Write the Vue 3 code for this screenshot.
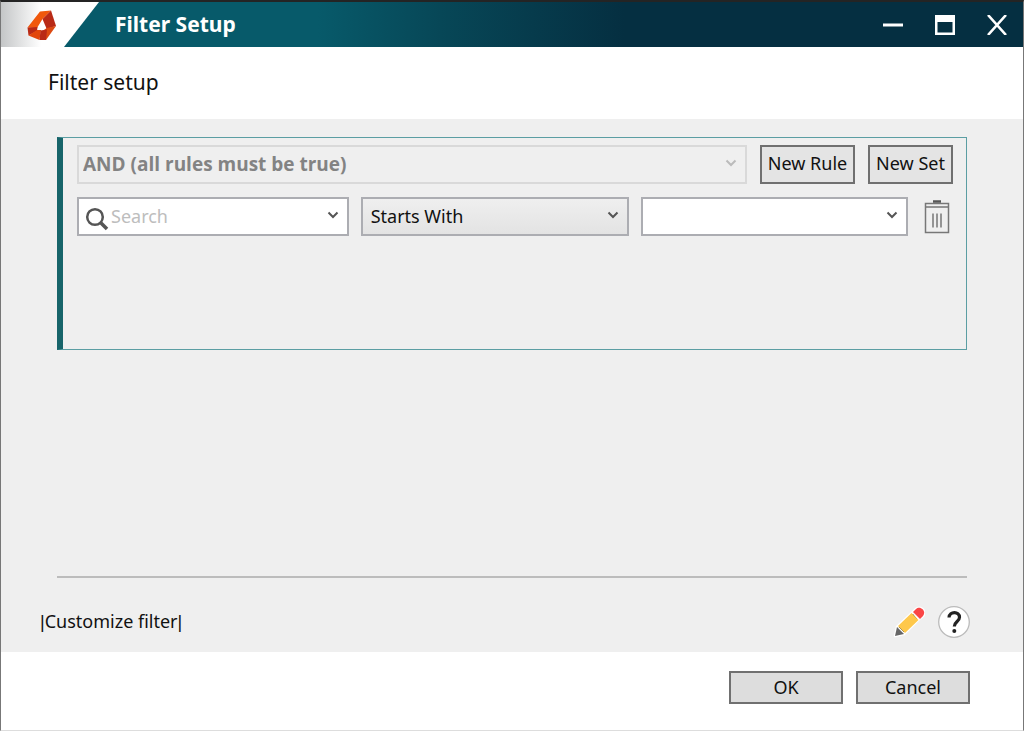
<script setup>
import { ref } from 'vue'

const mode = ref('AND (all rules must be true)')
const field = ref('')
const operator = ref('Starts With')
const value = ref('')
</script>

<template>
  <div class="window">
    <header class="titlebar">
      <div class="brand">
        <svg class="logo" viewBox="0 0 30 32" aria-hidden="true">
          <path d="M13 2.500 24 1.500 15.500 10 10 19 0.500 18.500Z" fill="#f0580c" />
          <path d="M24 1.500 29 17 19.700 20 15.500 10Z" fill="#b92a16" />
          <path d="M29 17 19 31 17 21 19.700 19Z" fill="#dc4a12" />
          <path d="M0.500 18.500 10.500 18 10 22 1.500 26.500Z" fill="#b92a16" />
          <path d="M1.500 26.500 10 21 14 21 12.500 31Z" fill="#e2470b" />
          <path d="M13.500 21.500 20 20.500 19 31 12.500 31Z" fill="#b92a16" />
        </svg>
      </div>
      <h1>Filter Setup</h1>
      <div class="controls">
        <button type="button" aria-label="Minimize">
          <svg viewBox="0 0 20 20"><path d="M0 10H20" stroke="#fff" stroke-width="3" /></svg>
        </button>
        <button type="button" aria-label="Maximize">
          <svg viewBox="0 0 20 20"><path fill="#fff" fill-rule="evenodd" d="M0 0H20V20H0ZM2.500 7V17.500H17.500V7Z" /></svg>
        </button>
        <button type="button" aria-label="Close">
          <svg viewBox="0 0 20 20"><path d="M1 0 19 20M19 0 1 20" stroke="#fff" stroke-width="2.600" /></svg>
        </button>
      </div>
    </header>

    <h2>Filter setup</h2>

    <main>
      <section class="rules" aria-label="Rules">
        <div class="set-row">
          <div class="combo disabled">
            <select v-model="mode" disabled aria-label="Rule combination">
              <option>AND (all rules must be true)</option>
            </select>
            <svg class="chevron" viewBox="0 0 12 8"><path d="M1.500 1.500 6 6 10.500 1.500" /></svg>
          </div>
          <button type="button" class="small">New Rule</button>
          <button type="button" class="small">New Set</button>
        </div>
        <div class="rule-row">
          <div class="combo search">
            <svg class="lens" viewBox="0 0 24 24" aria-hidden="true">
              <circle cx="10" cy="10" r="7.800" />
              <path d="M15.500 15.500 22 22" stroke-width="3.500" />
            </svg>
            <input v-model="field" type="text" placeholder="Search" aria-label="Field" />
            <svg class="chevron" viewBox="0 0 12 8"><path d="M1.500 1.500 6 6 10.500 1.500" /></svg>
          </div>
          <div class="combo operator">
            <select v-model="operator" aria-label="Operator">
              <option>Starts With</option>
            </select>
            <svg class="chevron" viewBox="0 0 12 8"><path d="M1.500 1.500 6 6 10.500 1.500" /></svg>
          </div>
          <div class="combo">
            <input v-model="value" type="text" aria-label="Value" />
            <svg class="chevron" viewBox="0 0 12 8"><path d="M1.500 1.500 6 6 10.500 1.500" /></svg>
          </div>
          <button type="button" class="icon" aria-label="Delete rule">
            <svg class="trash" viewBox="0 0 26 34">
              <path d="M1.500 3.500H24.500V32.500H1.500ZM1.500 7H24.500" fill="none" stroke="#777" stroke-width="1.500" />
              <path d="M9 1.500H17" stroke="#555" stroke-width="2.500" />
              <path d="M9 13.500V27.500M13 13.500V27.500M17 13.500V27.500" stroke="#777" stroke-width="1.500" />
            </svg>
          </button>
        </div>
      </section>

      <hr />

      <div class="caption">
        <p><span class="bar">|</span>Customize filter<span class="bar">|</span></p>
        <button type="button" class="icon" aria-label="Edit">
          <svg class="pencil" viewBox="0 0 32 32">
            <g stroke="#fff" stroke-width="2.500" stroke-linejoin="round">
              <path d="M2 30 4 21 11 28Z" />
              <path d="M4 21 20 6 26 13 11 28Z" />
              <path d="M20 6 23 3C27-1 34 5 30 10L26 13Z" />
            </g>
            <path d="M2 30 4 21 11 28Z" fill="#666" />
            <path d="M5 20 18.500 7 25.500 14 12 27Z" fill="#fec84b" />
            <path d="M20 6 23 3C27-1 34 5 30 10L27 13Z" fill="#fa4646" />
          </svg>
        </button>
        <button type="button" class="icon" aria-label="Help">
          <svg class="help" viewBox="0 0 32 32">
            <circle cx="16" cy="16" r="15.300" fill="#fff" stroke="#bbb" stroke-width="1.300" />
            <path d="M11 11.500C11.500 5 21.500 5 21.500 11.300C21.500 15.500 16.300 15.500 16.300 20.500" fill="none" stroke="#222" stroke-width="3.200" />
            <circle cx="16.300" cy="25" r="2" fill="#222" />
          </svg>
        </button>
      </div>
    </main>

    <footer>
      <button type="button">OK</button>
      <button type="button">Cancel</button>
    </footer>
  </div>
</template>

<style>
body {
  margin: 0;
}
</style>

<style scoped>
.window {
  box-sizing: border-box;
  min-height: 100vh;
  display: flex;
  flex-direction: column;
  border: 1px solid #777;
  border-top: 2px solid #242424;
  border-bottom-color: #ddd;
  background: #fff;
  color: #111;
  font: 18px/24px "Noto Sans", "Open Sans", sans-serif;
}

.window * {
  box-sizing: border-box;
}

button,
input,
select {
  font: inherit;
  color: inherit;
  margin: 0;
  border-radius: 0;
}

svg {
  display: block;
}

.titlebar {
  height: 45px;
  display: flex;
  align-items: center;
  padding-right: 16px;
  background: linear-gradient(90deg, #075a6a 0%, #075a6a 31%, #074757 43%, #052f41 61%, #052f41 100%);
}

.brand {
  width: 98px;
  height: 100%;
  display: flex;
  align-items: center;
  padding-left: 26px;
  background: linear-gradient(90deg, #c4c6c7, #fff 40px);
  clip-path: polygon(0 0, 100% 0, 63px 100%, 0 100%);
}

.logo {
  width: 30px;
  height: 32px;
}

h1 {
  margin: 0 auto 0 16px;
  padding-bottom: 2px;
  color: #fff;
  font-size: 21px;
  line-height: 28px;
  font-weight: 700;
}

.controls {
  display: flex;
  gap: 32px;
}

.controls button,
.icon {
  padding: 0;
  border: 0;
  background: none;
}

.controls svg {
  width: 20px;
  height: 20px;
}

h2 {
  margin: 0;
  padding: 21px 47px 23px;
  font-size: 21px;
  line-height: 28px;
  font-weight: 400;
}

main {
  flex: 1;
  display: flex;
  flex-direction: column;
  padding: 18px 53px 14px 56px;
  background: #efefef;
}

.rules {
  min-height: 213px;
  display: flex;
  flex-direction: column;
  gap: 13px;
  margin-right: 3px;
  padding: 7px 13px 7px 14px;
  border: 1px solid #5b9ea3;
  border-left: 6px solid #17646a;
}

.set-row {
  display: grid;
  grid-template-columns: 1fr 95px 85px;
  gap: 13px;
}

.rule-row {
  display: grid;
  grid-template-columns: 272fr 269fr 267fr 33px;
  gap: 12px;
}

.combo {
  height: 39px;
  min-width: 0;
  display: flex;
  align-items: center;
  position: relative;
  border: 2px solid #acadb2;
  background: #fff;
}

.combo select,
.combo input {
  flex: 1;
  min-width: 0;
  width: 100%;
  height: 100%;
  padding: 0 36px 2px 8px;
  border: 0;
  outline: 0;
  background: none;
  appearance: none;
}

.combo select:disabled {
  padding-left: 4px;
  color: #838383;
  font-family: "Open Sans", "Noto Sans", sans-serif;
  font-size: 19px;
  font-weight: 700;
  opacity: 1;
}

.combo.disabled {
  border-color: #d9d9d9;
  background: #efefef;
}

.combo.operator {
  background: linear-gradient(#efefef, #e3e3e3);
}

.chevron {
  position: absolute;
  right: 8px;
  top: 12px;
  width: 12px;
  height: 8px;
  pointer-events: none;
  fill: none;
  stroke: #555;
  stroke-width: 2;
}

.disabled .chevron {
  stroke: #bbb;
}

.lens {
  flex: none;
  width: 24px;
  height: 24px;
  margin: 4px 0 0 6px;
  fill: none;
  stroke: #555;
  stroke-width: 2.5;
}

.combo.search input {
  padding-left: 2px;
}

input::placeholder {
  color: #bdbdbd;
  opacity: 1;
}

.small {
  padding: 0 0 3px;
  border: 2px solid #707070;
  background: #e4e4e4;
  white-space: nowrap;
}

.rule-row .icon {
  justify-self: center;
}

.trash {
  width: 26px;
  height: 34px;
}

hr {
  width: calc(100% - 3px);
  height: 2px;
  margin: auto 0 28px;
  border: 0;
  background: #bcbcbc;
}

.caption {
  display: flex;
  align-items: center;
  gap: 13px;
  margin-left: -17px;
}

.caption p {
  margin: 0 auto 0 0;
  padding-bottom: 2px;
}

.bar {
  font-family: "Liberation Sans", Arial, sans-serif;
}

.pencil,
.help {
  width: 32px;
  height: 32px;
}

footer {
  display: flex;
  justify-content: flex-end;
  gap: 13px;
  padding: 19px 53px 26px;
}

footer button {
  width: 114px;
  height: 33px;
  padding: 0 0 2px;
  border: 2px solid #707070;
  background: #ddd;
}
</style>
